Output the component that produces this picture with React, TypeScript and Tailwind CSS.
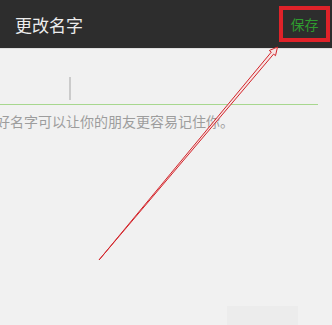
export default function App() {
  return (
    <div className="relative w-[332px] h-[325px] overflow-hidden bg-[#f1f1f1] font-['Noto_Sans_CJK_SC',sans-serif]">
      {/* top bar */}
      <div className="flex h-[49px] items-center justify-between bg-[#2d2d2d] border-b border-[#dedede]">
        <span className="pl-[15px] text-[17px] leading-none text-[#ededed]">更改名字</span>
        <div className="mr-[2px] flex h-[36px] w-[51px] items-center justify-center border-[4px] border-[#df2229]">
          <span className="text-[14px] leading-none text-[#2f9a2f]">保存</span>
        </div>
      </div>

      {/* name input */}
      <div className="mr-[14px] mt-[28px] h-[28px] border-b border-[#a7d78e]">
        <div className="ml-[69px] h-[23px] w-[2px] bg-[#cbcbcb]" />
      </div>

      <p className="ml-[-4px] mt-[9px] whitespace-nowrap text-[14px] leading-none text-[#9d9d9d]">
        好名字可以让你的朋友更容易记住你。
      </p>

      {/* faint smudge near bottom */}
      <div className="absolute left-[227px] top-[306px] h-[19px] w-[71px] bg-[#ececec]" />

      {/* annotation arrow */}
      <svg className="absolute inset-0" width="332" height="325" viewBox="0 0 332 325">
        <polygon
          points="99,260 273.6,54.1 275.5,55.7 277.5,47 269.3,50.5 271.3,52.1"
          fill="#f6e4e4"
          stroke="#d3252b"
          strokeWidth="1"
          strokeLinejoin="round"
        />
      </svg>
    </div>
  );
}
